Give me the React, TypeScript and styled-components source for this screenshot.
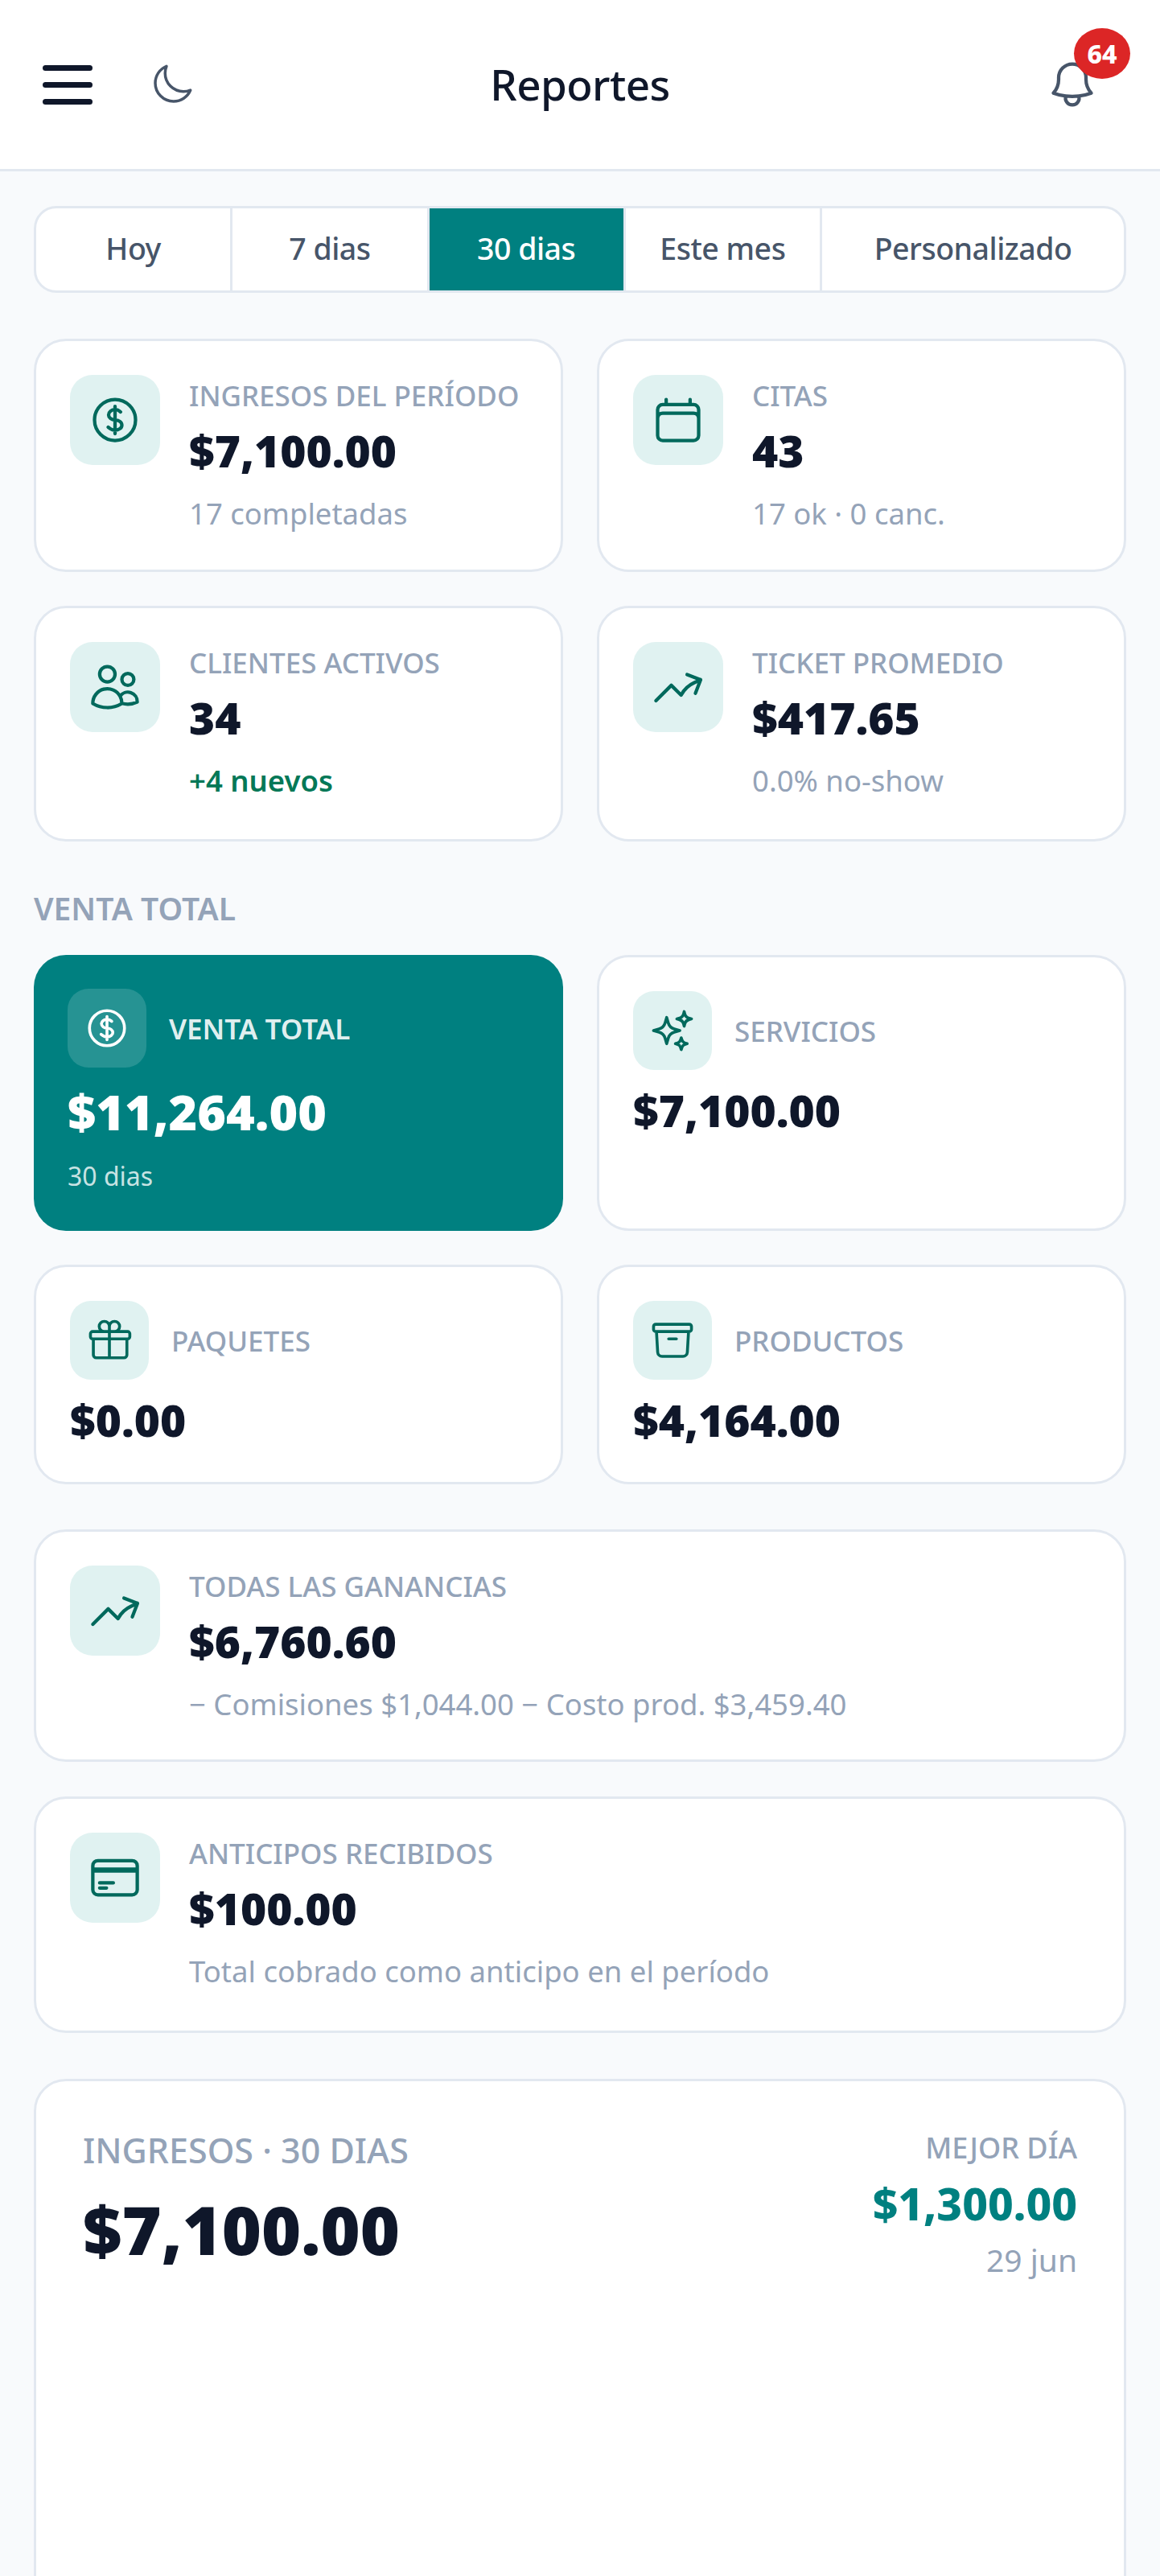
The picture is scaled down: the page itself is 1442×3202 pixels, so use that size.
import React from 'react';
import styled, { createGlobalStyle } from 'styled-components';
import {
    HiOutlineArchiveBox,
    HiOutlineArrowTrendingUp,
    HiOutlineBell,
    HiOutlineCalendar,
    HiOutlineCreditCard,
    HiOutlineCurrencyDollar,
    HiOutlineGift,
    HiOutlineMoon,
    HiOutlineSparkles,
    HiOutlineUsers,
} from 'react-icons/hi2';

const GlobalStyle = createGlobalStyle`
    html, body {
        margin: 0;
        padding: 0;
        background: #f8fafc;
    }
    body {
        font-family: "Noto Sans", "Open Sans", sans-serif;
        color: #0f172a;
    }
    * {
        box-sizing: border-box;
    }
`;

const Page = styled.div`
    width: 1442px;
    height: 3202px;
    overflow: hidden;
    background: #f8fafc;
`;

const Header = styled.header`
    height: 213px;
    background: #fff;
    border-bottom: 3px solid #e2e8f0;
    display: grid;
    grid-template-columns: 1fr auto 1fr;
    align-items: center;
    padding: 0 53px;
`;

const HeaderLeft = styled.div`
    display: flex;
    align-items: center;
    gap: 71px;
    color: #475569;
`;

const Title = styled.h1`
    margin: 0;
    font-size: 53px;
    font-weight: 500;
    line-height: 64px;
    letter-spacing: -0.6px;
    color: #0f172a;
`;

const HeaderRight = styled.div`
    display: flex;
    justify-content: flex-end;
`;

const BellWrap = styled.div`
    position: relative;
    width: 68px;
    height: 68px;
    margin-right: 22px;
    color: #475569;
`;

const Badge = styled.span`
    position: absolute;
    top: -36px;
    left: 36px;
    width: 70px;
    height: 63px;
    border-radius: 50%;
    background: #dc2626;
    color: #fff;
    font-size: 32px;
    font-weight: 800;
    display: flex;
    align-items: center;
    justify-content: center;
`;

const Main = styled.main`
    padding: 43px 42px 0;
`;

const Tabs = styled.div`
    display: grid;
    grid-template-columns: repeat(4, 1fr) 375px;
    height: 108px;
    border: 3px solid #e2e8f0;
    border-radius: 28px;
    background: #fff;
    overflow: hidden;
    margin-bottom: 57px;
`;

const Tab = styled.div<{ $active?: boolean }>`
    display: flex;
    align-items: center;
    justify-content: center;
    padding-bottom: 4px;
    font-size: 37.5px;
    font-weight: 500;
    letter-spacing: -0.5px;
    color: ${p => (p.$active ? '#fff' : '#475569')};
    background: ${p => (p.$active ? '#008080' : 'transparent')};
    border-right: 3px solid #e2e8f0;
    &:last-child {
        border-right: 0;
    }
`;

const Grid = styled.div<{ $bottom: number }>`
    display: grid;
    grid-template-columns: 658px 658px;
    column-gap: 42px;
    row-gap: 42px;
    margin-bottom: ${p => p.$bottom}px;
`;

const Card = styled.div`
    background: #fff;
    border: 3px solid #e2e8f0;
    border-radius: 40px;
`;

const StatCard = styled(Card)<{ $height: number }>`
    display: flex;
    gap: 36px;
    height: ${p => p.$height}px;
    padding: 42px;
`;

const IconBox = styled.div`
    flex: none;
    width: 112px;
    height: 112px;
    border-radius: 28px;
    background: #e0f2f1;
    color: #00695c;
    display: flex;
    align-items: center;
    justify-content: center;
`;

const StatBody = styled.div`
    display: flex;
    flex-direction: column;
`;

const StatLabel = styled.div`
    font-size: 35px;
    line-height: 52px;
    font-weight: 500;
    color: #94a3b8;
    white-space: nowrap;
`;

const StatValue = styled.div`
    font-size: 55px;
    line-height: 72px;
    margin-top: 6px;
    font-weight: 900;
    color: #0f172a;
    white-space: nowrap;
`;

const StatSub = styled.div<{ $good?: boolean }>`
    font-size: 36.5px;
    line-height: 56px;
    margin-top: 14px;
    font-weight: ${p => (p.$good ? 600 : 400)};
    color: ${p => (p.$good ? '#047857' : '#94a3b8')};
    white-space: nowrap;
`;

const SectionTitle = styled.h2`
    margin: 0 0 31px;
    font-size: 39px;
    line-height: 54px;
    font-weight: 600;
    color: #94a3b8;
`;

const SaleCard = styled(Card)<{ $height: number; $hero?: boolean }>`
    height: ${p => p.$height}px;
    padding: 42px;
    ${p => p.$hero && 'background: #008080; border: 0; color: #fff;'}
`;

const SaleHead = styled.div`
    display: flex;
    align-items: center;
    gap: 28px;
`;

const SaleIcon = styled.div<{ $hero?: boolean }>`
    flex: none;
    width: 98px;
    height: 98px;
    border-radius: 26px;
    background: ${p => (p.$hero ? 'rgba(255, 255, 255, 0.15)' : '#e0f2f1')};
    color: ${p => (p.$hero ? '#fff' : '#00695c')};
    display: flex;
    align-items: center;
    justify-content: center;
`;

const SaleLabel = styled.div<{ $hero?: boolean }>`
    font-size: 35px;
    font-weight: ${p => (p.$hero ? 600 : 500)};
    color: ${p => (p.$hero ? 'rgba(255, 255, 255, 0.9)' : '#94a3b8')};
`;

const SaleValue = styled.div`
    margin-top: 14px;
    font-size: 55px;
    line-height: 72px;
    font-weight: 900;
    white-space: nowrap;
`;

const HeroValue = styled.div`
    margin-top: 14px;
    font-size: 61px;
    line-height: 82px;
    font-weight: 900;
    white-space: nowrap;
`;

const SaleSub = styled.div`
    margin-top: 17px;
    font-size: 32px;
    line-height: 44px;
    color: rgba(255, 255, 255, 0.8);
`;

const Wide = styled.div`
    display: flex;
    flex-direction: column;
    gap: 43px;
    margin-bottom: 57px;
`;

const ChartCard = styled(Card)`
    height: 900px;
    padding: 58px 58px;
    display: flex;
    justify-content: space-between;
`;

const ChartLabel = styled.div`
    font-size: 43px;
    line-height: 56px;
    font-weight: 500;
    color: #94a3b8;
`;

const ChartValue = styled.div`
    margin-top: 18px;
    font-size: 84px;
    line-height: 104px;
    font-weight: 900;
`;

const BestDay = styled.div`
    text-align: right;
`;

const BestLabel = styled.div`
    margin-top: 2px;
    font-size: 36px;
    line-height: 46px;
    font-weight: 500;
    color: #94a3b8;
`;

const BestValue = styled.div`
    margin-top: 10px;
    font-size: 55px;
    line-height: 72px;
    font-weight: 800;
    color: #008080;
`;

const BestDate = styled.div`
    margin-top: 6px;
    font-size: 39px;
    line-height: 56px;
    color: #94a3b8;
`;

const MenuIcon = () => (
    <svg width="62" height="49" viewBox="0 0 62 49" fill="none" stroke="#0f172a" strokeWidth="7" strokeLinecap="round">
        <line x1="3.5" y1="3.5" x2="58.5" y2="3.5" />
        <line x1="3.5" y1="24.5" x2="58.5" y2="24.5" />
        <line x1="3.5" y1="45.5" x2="58.5" y2="45.5" />
    </svg>
);

const stats = [
    { icon: <HiOutlineCurrencyDollar size={68} />, label: 'INGRESOS DEL PERÍODO', value: '$7,100.00', sub: '17 completadas', height: 290 },
    { icon: <HiOutlineCalendar size={68} />, label: 'CITAS', value: '43', sub: '17 ok · 0 canc.', height: 290 },
    { icon: <HiOutlineUsers size={68} />, label: 'CLIENTES ACTIVOS', value: '34', sub: '+4 nuevos', good: true, height: 293 },
    { icon: <HiOutlineArrowTrendingUp size={68} />, label: 'TICKET PROMEDIO', value: '$417.65', sub: '0.0% no-show', height: 293 },
];

const sales = [
    { icon: <HiOutlineSparkles size={58} />, label: 'SERVICIOS', value: '$7,100.00', height: 343 },
    { icon: <HiOutlineGift size={58} />, label: 'PAQUETES', value: '$0.00', height: 273 },
    { icon: <HiOutlineArchiveBox size={58} />, label: 'PRODUCTOS', value: '$4,164.00', height: 273 },
];

export default function App() {
    return (
        <Page>
            <GlobalStyle />
            <Header>
                <HeaderLeft>
                    <MenuIcon />
                    <HiOutlineMoon size={56} />
                </HeaderLeft>
                <Title>Reportes</Title>
                <HeaderRight>
                    <BellWrap>
                        <HiOutlineBell size={68} />
                        <Badge>64</Badge>
                    </BellWrap>
                </HeaderRight>
            </Header>
            <Main>
                <Tabs>
                    <Tab>Hoy</Tab>
                    <Tab>7 dias</Tab>
                    <Tab $active>30 dias</Tab>
                    <Tab>Este mes</Tab>
                    <Tab>Personalizado</Tab>
                </Tabs>
                <Grid $bottom={56}>
                    {stats.map(s => (
                        <StatCard key={s.label} $height={s.height}>
                            <IconBox>{s.icon}</IconBox>
                            <StatBody>
                                <StatLabel>{s.label}</StatLabel>
                                <StatValue>{s.value}</StatValue>
                                <StatSub $good={s.good}>{s.sub}</StatSub>
                            </StatBody>
                        </StatCard>
                    ))}
                </Grid>
                <SectionTitle>VENTA TOTAL</SectionTitle>
                <Grid $bottom={56}>
                    <SaleCard $hero $height={343}>
                        <SaleHead>
                            <SaleIcon $hero>
                                <HiOutlineCurrencyDollar size={58} />
                            </SaleIcon>
                            <SaleLabel $hero>VENTA TOTAL</SaleLabel>
                        </SaleHead>
                        <HeroValue>$11,264.00</HeroValue>
                        <SaleSub>30 dias</SaleSub>
                    </SaleCard>
                    {sales.map(s => (
                        <SaleCard key={s.label} $height={s.height}>
                            <SaleHead>
                                <SaleIcon>{s.icon}</SaleIcon>
                                <SaleLabel>{s.label}</SaleLabel>
                            </SaleHead>
                            <SaleValue>{s.value}</SaleValue>
                        </SaleCard>
                    ))}
                </Grid>
                <Wide>
                    <StatCard $height={289}>
                        <IconBox><HiOutlineArrowTrendingUp size={68} /></IconBox>
                        <StatBody>
                            <StatLabel>TODAS LAS GANANCIAS</StatLabel>
                            <StatValue>$6,760.60</StatValue>
                            <StatSub>− Comisiones $1,044.00 − Costo prod. $3,459.40</StatSub>
                        </StatBody>
                    </StatCard>
                    <StatCard $height={294}>
                        <IconBox><HiOutlineCreditCard size={68} /></IconBox>
                        <StatBody>
                            <StatLabel>ANTICIPOS RECIBIDOS</StatLabel>
                            <StatValue>$100.00</StatValue>
                            <StatSub>Total cobrado como anticipo en el período</StatSub>
                        </StatBody>
                    </StatCard>
                </Wide>
                <ChartCard>
                    <div>
                        <ChartLabel>INGRESOS · 30 DIAS</ChartLabel>
                        <ChartValue>$7,100.00</ChartValue>
                    </div>
                    <BestDay>
                        <BestLabel>MEJOR DÍA</BestLabel>
                        <BestValue>$1,300.00</BestValue>
                        <BestDate>29 jun</BestDate>
                    </BestDay>
                </ChartCard>
            </Main>
        </Page>
    );
}
